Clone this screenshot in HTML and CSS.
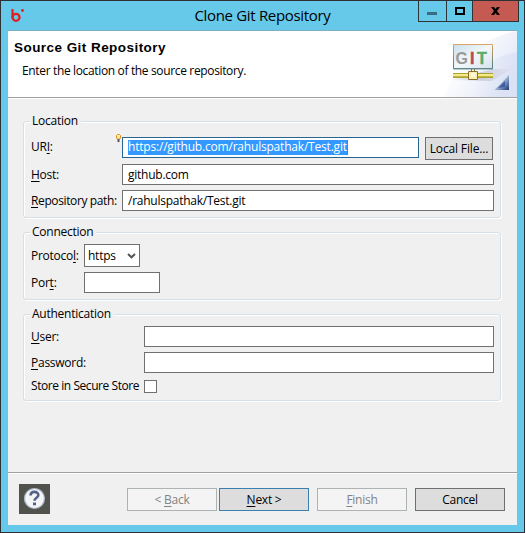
FILE: index.html
```
<!DOCTYPE html>
<html lang="en">
<head>
<meta charset="utf-8">
<title>Clone Git Repository</title>
<link rel="stylesheet" href="styles.css">
</head>
<body>
<div class="window">
  <header class="titlebar">
    <svg class="app-icon" width="16" height="16" viewBox="0 0 16 16"><path d="M1.500 0v9" fill="none" stroke="#e02020" stroke-width="2.200"/><circle cx="5" cy="8.300" r="3.500" fill="none" stroke="#e02020" stroke-width="2.300"/><circle cx="11.500" cy="1.500" r="1.400" fill="#e02020"/></svg>
    <h1 class="title">Clone Git Repository</h1>
    <div class="controls">
      <span class="control minimize"><svg width="27" height="20"><path d="M8 11h10v3h-10z" fill="#386c80"/></svg></span>
      <span class="control maximize"><svg width="25" height="20"><path d="M9 7h8v6h-8z" fill="none" stroke="#000" stroke-width="2"/></svg></span>
      <span class="control close"><svg width="45" height="20"><path d="M18 6h3l1.500 2 1.500-2h3l-3 4 3 4h-3l-1.500-2-1.500 2h-3l3-4z" fill="#000"/></svg></span>
    </div>
  </header>
  <main class="client">
    <section class="banner">
      <div>
        <h2 class="heading">Source Git Repository</h2>
        <p class="description">Enter the location of the source repository.</p>
      </div>
      <svg class="banner-art" width="75" height="66" viewBox="442 31 75 66">
        <defs>
          <linearGradient id="sky" x1="0" y1="0" x2="1" y2=".6"><stop offset=".3" stop-color="#fff"/><stop offset="1" stop-color="#e3e8f7"/></linearGradient>
          <linearGradient id="board" x1="0" y1="0" x2="1" y2="1"><stop offset="0" stop-color="#c9dfec"/><stop offset=".5" stop-color="#f3f7fa"/><stop offset="1" stop-color="#d5e1ef"/></linearGradient>
          <linearGradient id="frame" x1="0" y1="0" x2="0" y2="1"><stop offset="0" stop-color="#dca568"/><stop offset="1" stop-color="#477c7c"/></linearGradient>
          <linearGradient id="corner" x1="0" y1="0" x2="1" y2="1"><stop offset=".4" stop-color="#b9d3eb"/><stop offset="1" stop-color="#1c3478"/></linearGradient>
          <linearGradient id="shade" x1="0" y1="0" x2="1" y2="0"><stop offset="0" stop-color="#bbb5c9" stop-opacity=".1"/><stop offset=".5" stop-color="#aaa4bd" stop-opacity=".5"/><stop offset="1" stop-color="#bbb5c9" stop-opacity=".05"/></linearGradient>
          <linearGradient id="haze" x1="0" y1="0" x2="1" y2="0"><stop offset=".2" stop-color="#cfd9f1" stop-opacity="0"/><stop offset="1" stop-color="#cfd9f1" stop-opacity=".5"/></linearGradient>
        </defs>
        <path d="M445 97Q460 42 517 31v66z" fill="url(#sky)"/>
        <path d="M463 97Q475 60 517 52v45z" fill="url(#haze)"/>
        <path d="M451 80l42-11h18l-19 12z" fill="url(#shade)"/>
        <path d="M453.500 44.500h39v24h-39z" fill="url(#board)" stroke="url(#frame)"/>
        <path d="M453 69h40" stroke="#7b9799"/>
        <text class="git" y="63.500"><tspan x="455.500" fill="#999">G</tspan><tspan x="470" fill="#b84b56" stroke="#b84b56" stroke-width=".5">I</tspan><tspan x="477" fill="#58ad68" stroke="#58ad68" stroke-width=".5">T</tspan></text>
        <path d="M453 73.500h40M453 77.500h40" stroke="#aaa32d"/><path d="M453 75.500h40" stroke="#f3eb8b" stroke-width="3"/><path d="M453 76.500h40" stroke="#c3b63c"/>
        <path d="M471.500 71v-2M474.500 71v-2" stroke="#8a7830"/><path d="M468.500 71.500h9v8h-9z" fill="#ffecae" stroke="#8a7030"/><path d="M471 73h4v4h-4z" fill="#fff8dc"/>
        <path d="M494.500 90L509 75v15z" fill="url(#corner)"/><path d="M498 88l7-7v6z" fill="#3d5ea0"/>
      </svg>
    </section>
    <section class="page">
      <fieldset class="group location">
        <legend class="legend">Location</legend>
        <div class="row uri-row">
          <label class="label">UR<u>I</u>:</label>
          <svg class="hint" width="6" height="9" viewBox="0 0 6 9"><path d="M1.500 .5h2l1 1v2.500l-1 1h-2l-1-1v-2.500z" fill="#fff1a0" stroke="#df8b22"/><path d="M1.500 5h2v3h-2z" fill="#555"/></svg>
          <div class="field focused"><span class="selection">https://github.com/rahulspathak/Test.git</span></div>
          <button class="button local">Local File...</button>
        </div>
        <div class="row"><label class="label"><u>H</u>ost:</label><div class="field">github.com</div></div>
        <div class="row"><label class="label path-label"><u>R</u>epository path:</label><div class="field">/rahulspathak/Test.git</div></div>
      </fieldset>
      <fieldset class="group connection">
        <legend class="legend">Connection</legend>
        <div class="row protocol-row"><label class="label">Protoco<u>l</u>:</label><div class="field select">https<svg width="9" height="6" viewBox="0 0 9 6"><path d="M1 1l3.500 3.300L8 1" fill="none" stroke="#555" stroke-width="2"/></svg></div></div>
        <div class="row"><label class="label">Por<u>t</u>:</label><div class="field port"></div></div>
      </fieldset>
      <fieldset class="group auth">
        <legend class="legend">Authentication</legend>
        <div class="row"><label class="label"><u>U</u>ser:</label><div class="field"></div></div>
        <div class="row"><label class="label"><u>P</u>assword:</label><div class="field"></div></div>
        <div class="row check-row"><label class="label store-label">Store in Secure Store</label><span class="checkbox"></span></div>
      </fieldset>
    </section>
    <footer class="footer">
      <span class="help"><svg width="31" height="30" viewBox="0 0 31 30"><circle cx="15.500" cy="14.500" r="10" fill="#f4f5f7" stroke="#a8b3c1" stroke-width="1.200"/><path d="M11.500 11.500c.3-5 8-4.500 7.800-.3-.1 2.600-3.800 2.500-3.800 5.600" fill="none" stroke="#526488" stroke-width="2.600"/><path d="M14 18.500h3v2.800h-3z" fill="#526488"/></svg></span>
      <div class="actions">
        <button class="button disabled">&lt; <u>B</u>ack</button>
        <button class="button default"><u>N</u>ext &gt;</button>
        <button class="button disabled finish"><u>F</u>inish</button>
        <button class="button cancel">Cancel</button>
      </div>
    </footer>
  </main>
</div>
</body>
</html>
```
FILE: styles.css
```
* { box-sizing: border-box; }
body { margin: 0; background: #fff; font: 12px/16px "Open Sans", "Noto Sans", sans-serif; letter-spacing: -.25px; color: #000; }
h1, h2, p { margin: 0; font-weight: 400; }
svg { display: block; }
u { text-decoration: underline; text-underline-offset: 2px; text-decoration-thickness: 1px; text-decoration-skip-ink: none; }
.window { width: 525px; height: 533px; border: 1px solid #2d3034; background: #66c9ea; padding: 0 7px 7px; }
.titlebar { height: 29px; position: relative; display: flex; justify-content: center; }
.app-icon { position: absolute; left: 3px; top: 8px; }
.title { font-size: 15px; line-height: 29px; letter-spacing: -.32px; white-space: nowrap; }
.controls { position: absolute; right: -2px; top: 0; height: 21px; display: flex; border: 1px solid #2d3438; border-top: 0; }
.control + .control { border-left: 1px solid #2d3438; }
.close { background: #c45a52; }
.client { height: 495px; border-top: 1px solid #7fb0c2; background: #f0f0f0; display: flex; flex-direction: column; }
.banner { height: 68px; background: #fff; border-bottom: 1px solid #fff; box-shadow: inset 0 -1px #a0a0a0; display: flex; justify-content: space-between; }
.heading { font: 700 13.5px/16px "Liberation Sans", sans-serif; padding: 9px 0 0 6px; letter-spacing: .45px; }
.description { padding: 7px 0 0 14px; letter-spacing: -.35px; }
.git { font: 700 16px "Liberation Sans", sans-serif; letter-spacing: 0; }
.page { height: 373px; padding: 22px 15px 0; }
.group { position: relative; margin: 0; min-width: 0; border: 1px solid #d5dfe8; border-radius: 3px; box-shadow: inset 1px 1px #fff, 1px 1px #fff; width: 478px; padding: 0 6px; }
.legend { position: absolute; left: 6px; top: -9px; padding: 0 3px 0 2px; background: #f0f0f0; white-space: nowrap; }
.location { height: 97px; padding-top: 12px; }
.connection { height: 68px; margin-top: 14px; padding-top: 11px; }
.auth { height: 87px; margin-top: 14px; padding-top: 11px; }
.row { display: grid; grid-template-columns: 91px 372px; height: 21px; align-items: center; padding-left: 1px; margin-bottom: 5px; position: relative; }
.label { white-space: nowrap; }
.path-label { letter-spacing: -.38px; }
.store-label { letter-spacing: -.44px; }
.uri-row { grid-template-columns: 91px 297px 68px; column-gap: 0; margin-bottom: 9px; }
.hint { position: absolute; left: 86px; top: 0; }
.local { margin: 3px 0 0 6px; width: 68px; }
.connection .row { grid-template-columns: 53px 76px; }
.connection .protocol-row { grid-template-columns: 53px 56px; height: 23px; }
.auth .row { grid-template-columns: 113px 350px; }
.field { height: 21px; border: 1px solid #707070; background: #fff; padding: 1px 5px; line-height: 18px; white-space: nowrap; }
.focused { border-color: #286590; padding-top: 2px; }
.selection { display: inline-block; height: 15px; line-height: 13px; vertical-align: top; background: #3399ff; color: #fff; border-right: 1px solid #cc6600; letter-spacing: -.2px; }
.select { height: 23px; display: flex; justify-content: space-between; align-items: center; padding: 0 3px; }
.auth .check-row { height: 13px; margin-top: 5px; }
.checkbox { width: 13px; height: 13px; border: 1px solid #707070; background: #fff; }
.button { height: 23px; border: 1px solid #707070; background: #ddd; font: inherit; letter-spacing: inherit; color: #000; padding: 0; white-space: nowrap; }
.local { letter-spacing: -.15px; }
.footer { flex: 1; border-top: 1px solid #a0a0a0; box-shadow: inset 0 1px #fff; display: flex; justify-content: space-between; padding: 11px 12px 0 11px; }
.help { width: 31px; height: 30px; background: #50524e; }
.actions { display: flex; padding-top: 4px; }
.actions .button { width: 90px; margin-left: 2px; }
.actions .finish, .actions .cancel { margin-left: 8px; }
.default { border-color: #3c7fb1; }
.disabled { color: #838383; border-color: #adb2b5; background: #f4f4f4; }
```
